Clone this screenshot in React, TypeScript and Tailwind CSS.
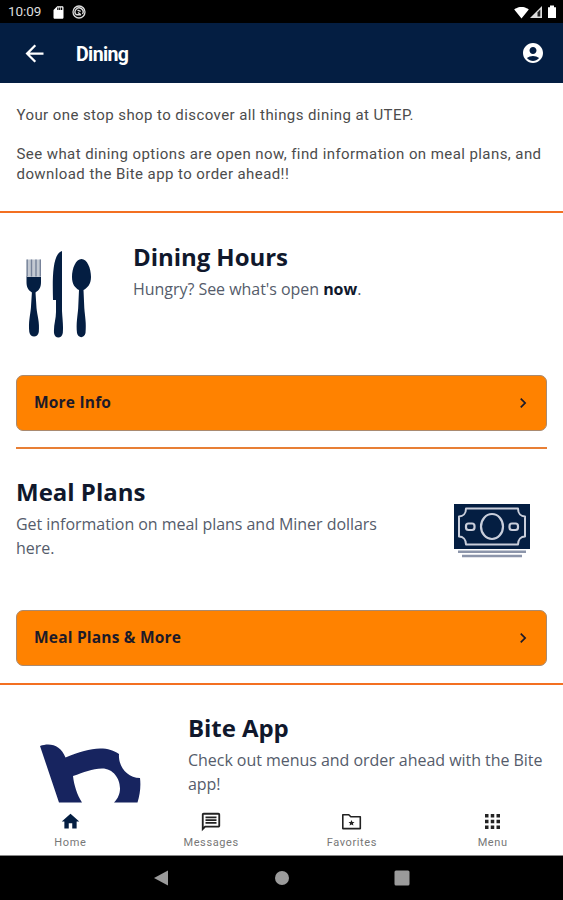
import React from 'react';
import { MdArrowBack, MdAccountCircle, MdHome, MdOutlineMessage, MdApps, MdChevronRight, MdSdCard, MdSignalWifi4Bar } from 'react-icons/md';

const NAVY = '#041e42';

const StatusBar = () => (
  <div className="flex h-[23px] shrink-0 items-center bg-black pl-2 pr-[6px] pt-px text-white">
    <span className="w-[43px] font-['Roboto',sans-serif] text-[13.5px] leading-none tracking-[-0.1px] text-[#ddd]">10:09</span>
    <MdSdCard size={15} />
    <svg className="ml-[6px]" width="14" height="14" viewBox="0 0 14 14" fill="none" stroke="#ddd">
      <circle cx="7" cy="7" r="6" strokeWidth="1.3" />
      <path d="M4.3 9.8A4 4 0 1 1 10.5 9M4.3 9.8H9M6 7.5l3 2.3M5.5 5.2l3.2 1.2" strokeWidth="1.4" />
    </svg>
    <div className="ml-auto flex items-center">
      <MdSignalWifi4Bar size={15} />
      <svg width="14" height="14" viewBox="0 0 14 14">
        <path d="M1 13 13 1v12z" fill="#ddd" />
        <path d="M8.5 7.5 11.3 4.5v7H8.5z" fill="#222" />
      </svg>
      <svg className="ml-[4px]" width="10" height="14" viewBox="0 0 10 14" fill="#fff">
        <path d="M3 .5h4v1.7h2V13H1V2.200h2z" />
      </svg>
    </div>
  </div>
);

const Cutlery = () => (
  <svg width="76" height="90" viewBox="0 0 76 90" fill={NAVY}>
    <path d="M10.500 26h14.500v6c0 6-2 8-5.500 10.500l1 15.500c.8 8 3.300 14 2.300 24-1 6-8.500 6-9.500 0-1-10 .8-16 1.600-24l1-15.500C12.500 40 10.500 38 10.500 32z" />
    <path d="M10.500 9.500H25V27H10.500z" fill="#c3c9d2" />
    <path d="M11.200 9.500v17M15.500 9.500v17M20 9.500v17M24.300 9.500v17" stroke="#77839a" strokeWidth="1.400" />
    <path d="M46 1v60c.3 7 1.500 14 .8 22-1 6-8 6-8.800 0-.5-8 2-14 2-21V50h-3C36.500 30 36 4 46 1z" />
    <path d="M65.500 9c5.500 0 9.500 9 9.500 18 0 7-3.500 11-7.500 13l.8 18c.7 9 2.200 15 1.200 25-1 5.500-7.500 5.500-8.500 0-1-10 .5-16 1.200-25l.8-18c-4-2-7-6-7-13 0-9 4-18 9.500-18z" />
  </svg>
);

const Cash = () => (
  <svg width="76" height="54" viewBox="0 0 76 54" fill="none" stroke="#c9cedb">
    <path d="M0 0h76v45H0z" fill={NAVY} stroke="none" />
    <path d="M12 4.500h52c0 5 3 8 7 8v20c-4 0-7 3-7 8H12c0-5-3-8-7-8v-20c4 0 7-3 7-8z" strokeWidth="2" strokeLinejoin="round" />
    <ellipse cx="38" cy="22.500" rx="11" ry="12.500" strokeWidth="2.200" />
    <rect x="12" y="19.500" width="8.500" height="6.500" rx="2.500" strokeWidth="2.200" />
    <rect x="55.500" y="19.500" width="8.500" height="6.500" rx="2.500" strokeWidth="2.200" />
    <path d="M4 47.800h68M8 52h60" stroke="#8c95aa" strokeWidth="2.400" />
  </svg>
);

const BiteLogo = () => (
  <svg width="102" height="60" viewBox="0 0 102 60" fill="#17245f">
    <path d="M0 2C11-2 21 2 25.500 13.500 39 8 50 4.500 60 4.500c8 0 14 2 19 5.500-1 12 8 24 21 24 1 8 0 17-2.500 24.500H74c12-11 5-34-12-34-10 0-18 4-29 7.500 1 9 4 19 9 26.500H19z" />
  </svg>
);

const LinkButton = ({ label }: { label: string }) => (
  <button className="flex h-14 w-full items-center justify-between rounded-[7px] border border-[#a98a70] bg-[#ff8200] pl-[17px] pr-[13px] text-[15.5px] font-bold tracking-[0.2px] text-[#1d1a28]">
    {label}
    <MdChevronRight size={20} />
  </button>
);

const tabs = [
  { label: 'Home', icon: <MdHome size={21} color={NAVY} /> },
  { label: 'Messages', icon: <MdOutlineMessage size={22} /> },
  {
    label: 'Favorites',
    icon: (
      <svg width="21" height="21" viewBox="0 0 21 21" fill="none" stroke="currentColor">
        <path d="M1.800 3.800h6l2 2h9.500v11.800H1.800z" strokeWidth="1.600" strokeLinejoin="round" />
        <path d="m10.500 9 .9 1.900 2.100.2-1.600 1.400.5 2.100-1.900-1.100-1.900 1.100.5-2.100-1.600-1.400 2.100-.2z" fill="currentColor" stroke="none" />
      </svg>
    ),
  },
  {
    label: 'Menu',
    icon: (
      <svg width="15" height="15" viewBox="0 0 15 15" fill="currentColor">
        <path d="M0 0h3.500v3.500H0zM5.750 0h3.500v3.500h-3.500zM11.500 0H15v3.500h-3.500zM0 5.750h3.500v3.500H0zM5.750 5.750h3.500v3.500h-3.500zM11.500 5.750H15v3.500h-3.500zM0 11.500h3.500V15H0zM5.750 11.500h3.500V15h-3.500zM11.500 11.500H15V15h-3.500z" />
      </svg>
    ),
  },
];

const App = () => {
  return (
    <div className="flex h-[900px] w-[563px] flex-col overflow-hidden bg-white font-['Open_Sans',sans-serif] text-[#10182c]">
      <StatusBar />
      <header className="flex h-[60px] shrink-0 items-center bg-[#041e42] pl-[21px] pr-[18px] text-white">
        <MdArrowBack size={27} />
        <h1 className="ml-[28px] pt-[3px] font-['Roboto',sans-serif] text-[19.5px] font-bold tracking-[-0.6px]">Dining</h1>
        <MdAccountCircle className="ml-auto" size={24} />
      </header>

      <main className="h-[720px] shrink-0 overflow-hidden">
        <div className="h-[128px] pl-[16.500px] pr-3 pt-[23px] font-['Roboto',sans-serif] text-[15px] leading-[19.500px] tracking-[0.42px] text-[#4c4c4c]">
          <p>Your one stop shop to discover all things dining at UTEP.</p>
          <p className="mt-[19.500px]">See what dining options are open now, find information on meal plans, and download the Bite app to order ahead!!</p>
        </div>

        <section className="border-t-2 border-[#f37021]">
          <div className="mx-4 h-[236px] border-b-2 border-[#e87f35]">
            <div className="flex h-[162px] pt-[28px]">
              <div className="w-[117px] pt-[9px]"><Cutlery /></div>
              <div>
                <h2 className="text-[24px] font-bold leading-8 tracking-[-0.06px]">Dining Hours</h2>
                <p className="mt-[4px] text-base leading-6 tracking-[-0.04px] text-[#555c6b]">Hungry? See what's open <b className="text-[#10182c]">now</b>.</p>
              </div>
            </div>
            <LinkButton label="More Info" />
          </div>
        </section>

        <section className="h-[236px] border-b-2 border-[#f37021] px-4">
          <div className="flex h-[161px] justify-between pr-[17px] pt-[27px]">
            <div className="w-[375px]">
              <h2 className="text-[24px] font-bold leading-8">Meal Plans</h2>
              <p className="mt-[4px] text-base leading-6 tracking-[-0.04px] text-[#555c6b]">Get information on meal plans and Miner dollars here.</p>
            </div>
            <div className="pt-[28px]"><Cash /></div>
          </div>
          <LinkButton label="Meal Plans & More" />
        </section>

        <section className="flex pl-10 pt-[27px]">
          <div className="w-[148px] shrink-0 pt-[32px]"><BiteLogo /></div>
          <div>
            <h2 className="text-[24px] font-bold leading-8 tracking-[-0.06px]">Bite App</h2>
            <p className="mt-[4px] text-base leading-6 tracking-[-0.04px] text-[#555c6b]">Check out menus and order ahead with the Bite app!</p>
          </div>
        </section>
      </main>

      <nav className="grid h-[53px] shrink-0 grid-cols-4 border-b border-[#888] bg-white">
        {tabs.map((tab) => (
          <div key={tab.label} className="flex flex-col items-center pt-[7px] text-[#222]">
            <div className="flex h-[23px] items-center">{tab.icon}</div>
            <span className="mt-[3px] font-['Roboto',sans-serif] text-[11px] leading-[14px] tracking-[0.6px] text-[#777]">{tab.label}</span>
          </div>
        ))}
      </nav>

      <div className="flex h-11 shrink-0 items-center justify-center bg-black">
        <svg width="256" height="16" viewBox="0 0 256 16" fill="#9b9b9b">
          <path d="M0 8 14 .5v15z" />
          <circle cx="128" cy="8" r="7" />
          <rect x="240.500" y=".5" width="15" height="15" rx="1.500" />
        </svg>
      </div>
    </div>
  );
};

export default App;
